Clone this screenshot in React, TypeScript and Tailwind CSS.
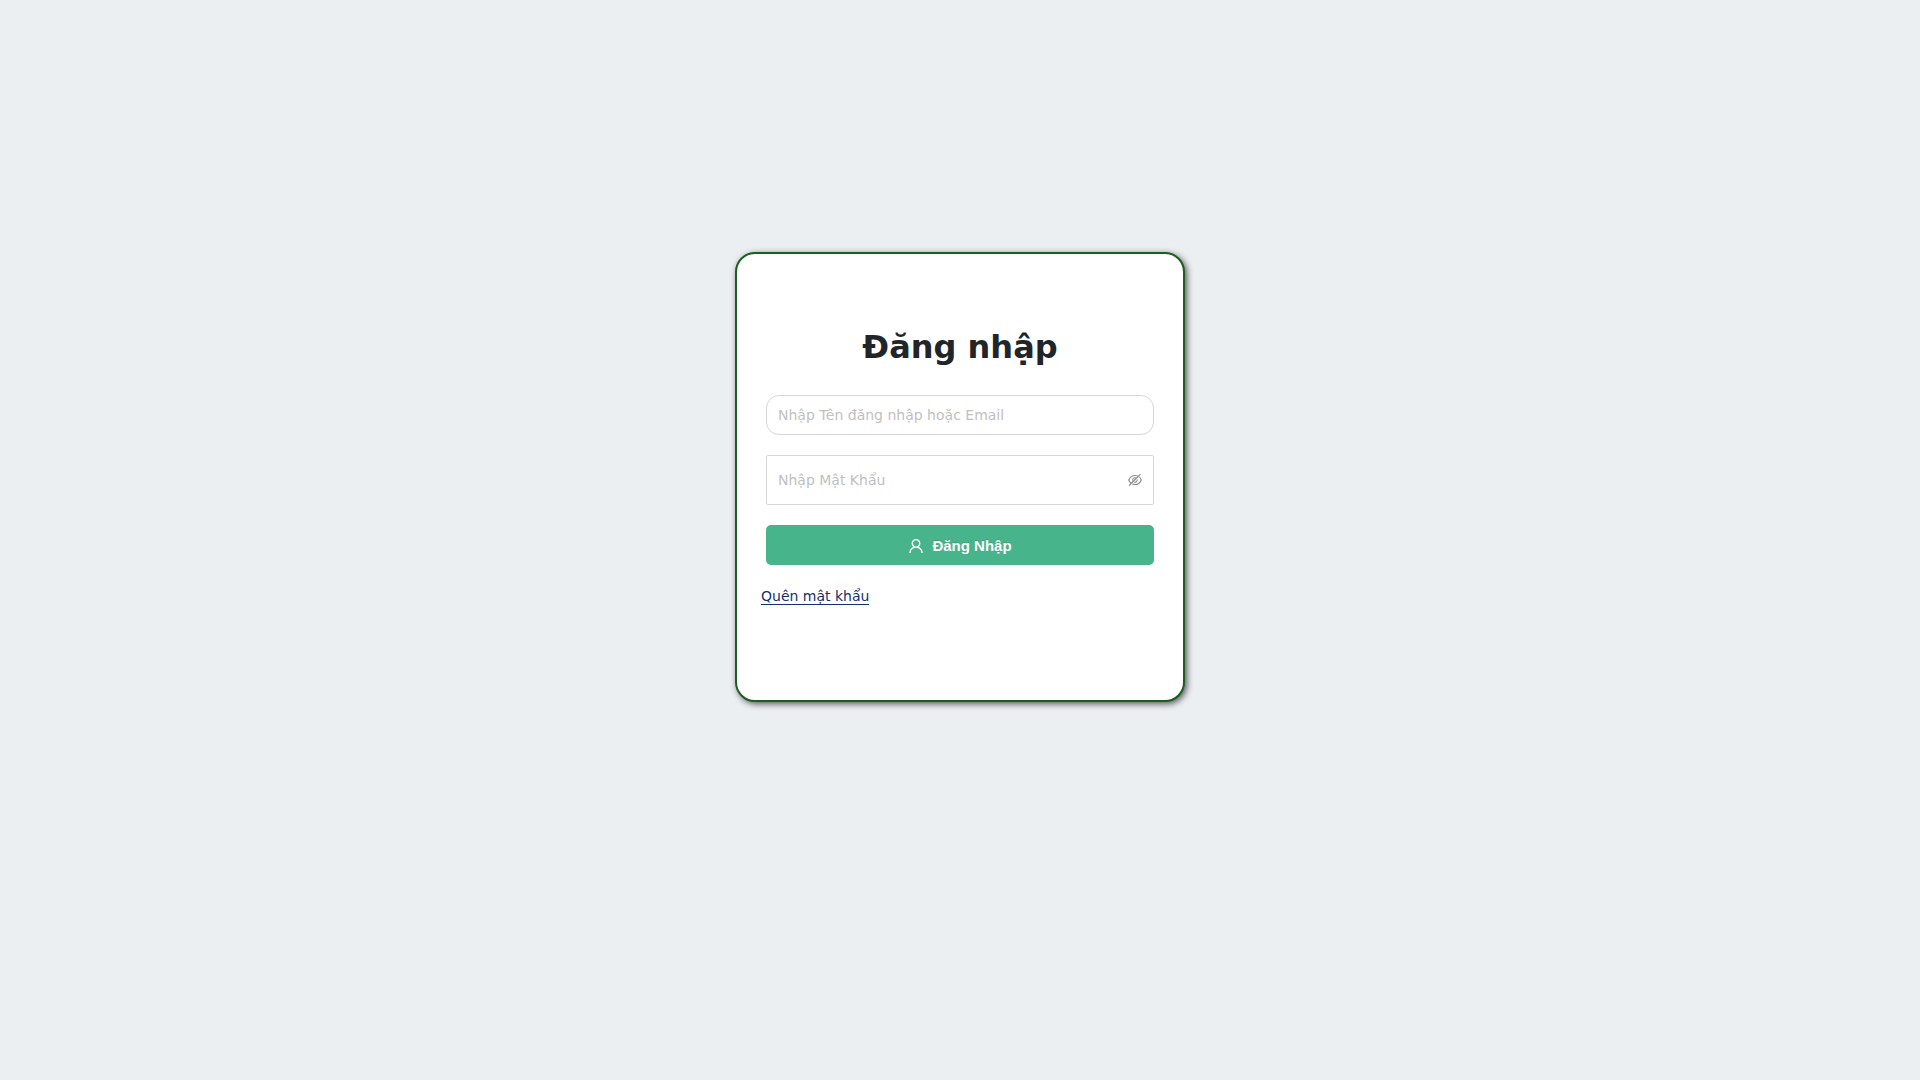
import { useState } from "react";
import { AiOutlineEyeInvisible, AiOutlineEye, AiOutlineUser } from "react-icons/ai";

const GLYPH_BOX = "64 64 896 896";

export default function App() {
  const [visible, setVisible] = useState(false);
  const VisibilityIcon = visible ? AiOutlineEye : AiOutlineEyeInvisible;

  return (
    <main className="flex min-h-screen flex-col items-center bg-[#ebeff2] px-4 pt-[252px] pb-16 font-['DejaVu_Sans',sans-serif] text-sm text-[#212529]">
      <section className="min-h-[450px] w-full max-w-[450px] rounded-[20px] border-2 border-[#1b5e20] bg-white px-6 pt-[69px] shadow-[2px_2px_6px_rgba(40,32,36,0.75)]">
        <h1 className="text-center text-[32px] leading-[48px] font-bold">Đăng nhập</h1>
        <form className="mt-6 flex flex-col gap-5 px-[5px]" onSubmit={(e) => e.preventDefault()}>
          <input
            type="text"
            aria-label="Tên đăng nhập hoặc Email"
            placeholder="Nhập Tên đăng nhập hoặc Email"
            className="h-10 w-full rounded-[13px] border border-[#d6d6d6] bg-white px-[11px] outline-none placeholder:text-[#bfbfbf]"
          />
          <div className="flex h-[50px] items-center rounded-xs border border-[#d6d6d6] bg-white px-[11px]">
            <input
              type={visible ? "text" : "password"}
              aria-label="Mật khẩu"
              placeholder="Nhập Mật Khẩu"
              className="min-w-0 flex-1 outline-none placeholder:text-[#bfbfbf]"
            />
            <button
              type="button"
              aria-label="Hiện mật khẩu"
              onClick={() => setVisible(!visible)}
              className="text-[#8c8c8c]"
            >
              <VisibilityIcon size={14} viewBox={GLYPH_BOX} />
            </button>
          </div>
          <button
            type="submit"
            className="flex h-10 items-center justify-center gap-2 rounded-[5px] bg-[#48b48b] pt-0.5 font-['Liberation_Sans',sans-serif] text-[15px] font-bold text-white text-shadow-[0_-1px_0_rgba(0,0,0,0.12)]"
          >
            <AiOutlineUser size={16} viewBox={GLYPH_BOX} />
            <span>Đăng Nhập</span>
          </button>
        </form>
        <a href="#" className="mt-[23px] block w-fit border-b border-[#14306f] leading-4 text-[#14306f]">
          Quên mật khẩu
        </a>
      </section>
    </main>
  );
}
